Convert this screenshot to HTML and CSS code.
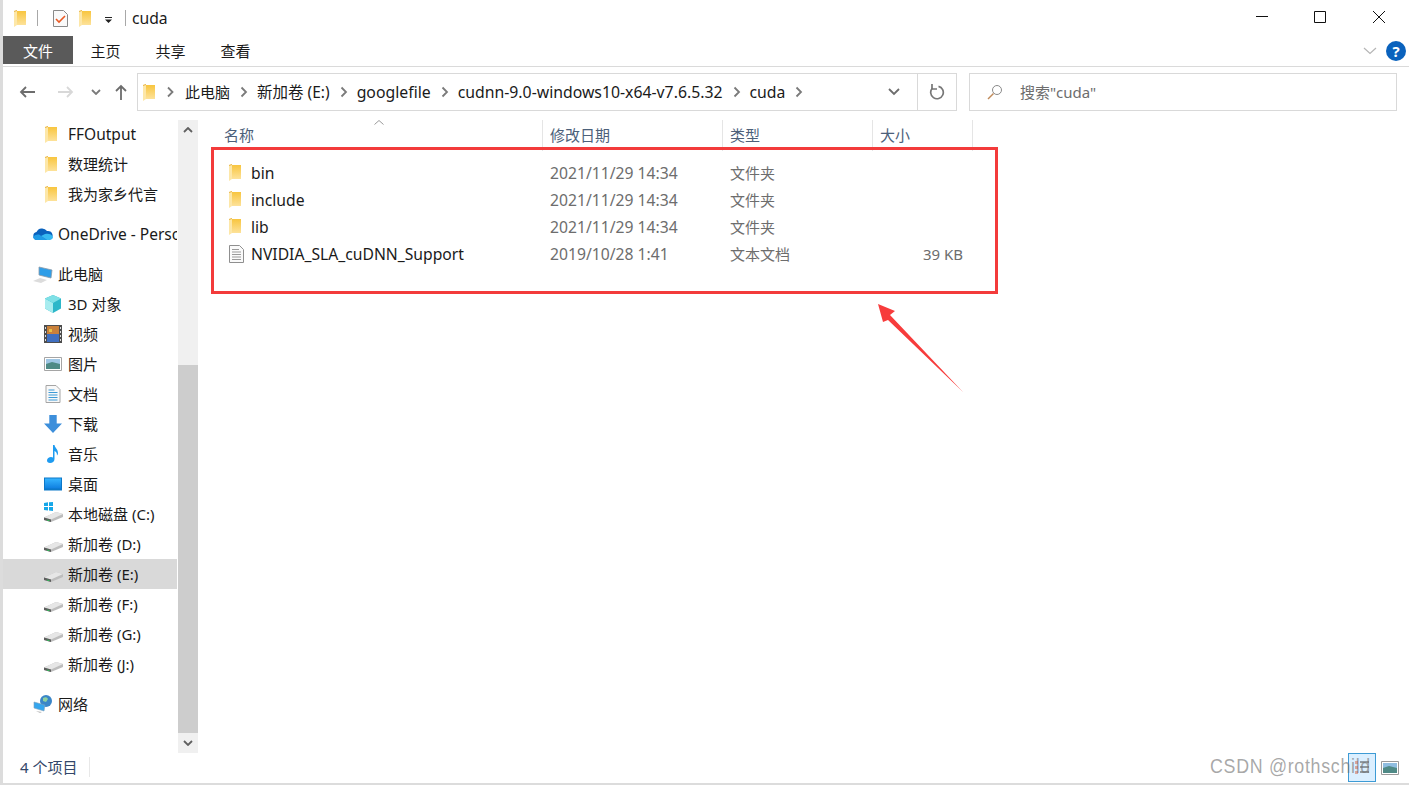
FILE: index.html
```html
<!DOCTYPE html>
<html lang="zh-CN">
<head>
    <meta charset="UTF-8">
    <title>cuda</title>
    <link rel="stylesheet" href="styles.css">
</head>
<body>
    <svg class="defs" width="0" height="0">
        <defs>
            <linearGradient id="fold" x1="0" y1="0" x2="0" y2="1"><stop offset="0" stop-color="#f8c53f"/><stop offset="1" stop-color="#fde29a"/></linearGradient>
            <linearGradient id="blue" x1="0" y1="0" x2="0" y2="1"><stop offset="0" stop-color="#35b4ff"/><stop offset="1" stop-color="#0f7fe0"/></linearGradient>
            <symbol id="folder" viewBox="0 0 12 17">
                <path d="M3 1h9v14H3z" fill="url(#fold)"/>
                <path d="M0 1l3-1v15l-3 2z" fill="#fde7a8"/>
                <path d="M0 1l3-1v1L0 2z" fill="#e9b64a"/>
            </symbol>
            <symbol id="drive" viewBox="0 0 19 10">
                <path d="M0 5.500L12 0l7 2v3L7 10 0 8z" fill="#bdbdbd"/>
                <path d="M0 5.500l7 2L19 2l-7-2z" fill="#e6e6e6"/>
                <path d="M0 5.500l7 2V10L0 8z" fill="#5e5e5e"/>
                <path d="M3 7.500l2.500.7v1l-2.500-.7z" fill="#2fbf5a"/>
            </symbol>
            <symbol id="chev" viewBox="0 0 8 12">
                <path d="M2 1.500L6.500 6 2 10.500" fill="none" stroke="#7a7a7a" stroke-width="1.8"/>
            </symbol>
        </defs>
    </svg>

    <div class="window">
        <div class="titlebar">
            <svg class="ic-folder"><use href="#folder"/></svg>
            <span class="qsep first"></span>
            <svg class="ic-check" viewBox="0 0 15 17">
                <path d="M.5.500h10l4 4v12H.5z" fill="#fafafa" stroke="#8a8a8a"/>
                <path d="M3 9l3 3 6-6" fill="none" stroke="#ea5a24" stroke-width="1.6"/>
            </svg>
            <svg class="ic-folder q2"><use href="#folder"/></svg>
            <svg class="ic-drop" viewBox="0 0 7 6"><path d="M0 0h7v1H0zM0 2.500h7L3.500 6z" fill="#222"/></svg>
            <span class="qsep last"></span>
            <span class="wintitle">cuda</span>
            <div class="winbtns">
                <svg viewBox="0 0 58 36"><path d="M23 16.500h12" stroke="#111" fill="none"/></svg>
                <svg viewBox="0 0 58 36"><path d="M23.500 11.500h11v11h-11z" stroke="#111" fill="none"/></svg>
                <svg viewBox="0 0 58 36"><path d="M24 11l12 12M36 11L24 23" stroke="#111" fill="none"/></svg>
            </div>
        </div>

        <div class="ribbon">
            <div class="tab active">文件</div>
            <div class="tab">主页</div>
            <div class="tab">共享</div>
            <div class="tab">查看</div>
            <svg class="rib-chev" viewBox="0 0 14 8"><path d="M1 1l6 5.500L13 1" fill="none" stroke="#b5b5b5" stroke-width="1.2"/></svg>
            <div class="help">?</div>
        </div>

        <div class="addrrow">
            <div class="navbtns">
                <svg viewBox="0 0 16 12" class="nav-back"><path d="M16 6H2M7 1L2 6l5 5" fill="none" stroke="#6d6d6d" stroke-width="1.8"/></svg>
                <svg viewBox="0 0 16 12" class="nav-fwd"><path d="M0 6h14M9 1l5 5-5 5" fill="none" stroke="#d8d8d8" stroke-width="1.8"/></svg>
                <svg viewBox="0 0 10 6" class="nav-down"><path d="M1 1l4 4 4-4" fill="none" stroke="#7a7a7a" stroke-width="1.8"/></svg>
                <svg viewBox="0 0 12 16" class="nav-up"><path d="M6 16V2M1 7l5-5 5 5" fill="none" stroke="#6d6d6d" stroke-width="1.8"/></svg>
            </div>
            <div class="addrbox">
                <svg class="ic-folder addr-folder"><use href="#folder"/></svg>
                <svg class="crumb-chev first"><use href="#chev"/></svg>
                <span>此电脑</span>
                <svg class="crumb-chev"><use href="#chev"/></svg>
                <span class="latin-s">新加卷 (E:)</span>
                <svg class="crumb-chev"><use href="#chev"/></svg>
                <span class="latin">googlefile</span>
                <svg class="crumb-chev"><use href="#chev"/></svg>
                <span class="latin">cudnn-9.0-windows10-x64-v7.6.5.32</span>
                <svg class="crumb-chev"><use href="#chev"/></svg>
                <span class="latin">cuda</span>
                <svg class="crumb-chev"><use href="#chev"/></svg>
                <svg class="addr-drop" viewBox="0 0 12 8"><path d="M1 1l5 5 5-5" fill="none" stroke="#6d6d6d" stroke-width="1.8"/></svg>
                <div class="refresh">
                    <svg viewBox="0 0 16 16" width="16" height="16"><path d="M9.500 2.300A6.300 6.300 0 1 1 3.500 4" fill="none" stroke="#777" stroke-width="1.7"/><path d="M3 0v5h5" fill="none" stroke="#777" stroke-width="1.700"/></svg>
                </div>
            </div>
            <div class="searchbox">
                <svg viewBox="0 0 16 16" width="16" height="16"><circle cx="10" cy="6" r="4.500" fill="none" stroke="#8a8a8a"/><path d="M6.500 9.500L1 15" stroke="#c08a5a" stroke-width="1.400"/></svg>
                <span>搜索"cuda"</span>
            </div>
        </div>

        <div class="body">
            <nav class="sidebar">
                <div class="tree">
                    <div class="node lv2"><svg class="ic-folder"><use href="#folder"/></svg><span class="latin-s">FFOutput</span></div>
                    <div class="node lv2"><svg class="ic-folder"><use href="#folder"/></svg>数理统计</div>
                    <div class="node lv2"><svg class="ic-folder"><use href="#folder"/></svg>我为家乡代言</div>

                    <div class="node lv1 gap">
                        <svg class="ic-big" viewBox="0 0 20 12"><path d="M4 12a4 4 0 0 1-.5-7.900A6 6 0 0 1 14 3a4.500 4.500 0 0 1 2 9z" fill="#0a62bd"/><path d="M4 12c-2 0-3.700-1-4-3 3-3 6-3 8-1l6 4z" fill="#1f9be6"/><path d="M8 8l4-2c3-1 7 0 8 3 0 2-2 3-4 3H14z" fill="#37b9f1"/></svg>
                        <span class="latin-s">OneDrive - Personal</span>
                    </div>

                    <div class="node lv1 gap">
                        <svg class="ic-big" viewBox="0 0 20 18"><path d="M6 2l13 3-1 8-12-3z" fill="#2f9ee8" stroke="#8a9aa8" stroke-width=".8"/><path d="M0 16l7-3 7 2-6 3z" fill="#dcdcdc"/></svg>
                        此电脑
                    </div>
                    <div class="node lv2">
                        <svg class="ic-item" viewBox="0 0 18 18"><path d="M9 0l8 3.500v10L9 18l-8-4.500v-10z" fill="#2db7c9"/><path d="M1 3.500L9 8v10l-8-4.500z" fill="#a8ecef"/><path d="M9 0l8 3.500L9 8 1 3.500z" fill="#7fe0e6"/></svg>
                        3D 对象
                    </div>
                    <div class="node lv2">
                        <svg class="ic-item" viewBox="0 0 18 18"><path d="M0 0h18v18H0z" fill="#4d4d4d"/><path d="M3 1h12v8H3z" fill="#c9803a"/><path d="M3 9h12v8H3z" fill="#3f6fc0"/><path d="M5 4h3v3H5z" fill="#e5c247"/><path d="M1 2h1v2H1zM1 6h1v2H1zM1 10h1v2H1zM1 14h1v2H1zM16 2h1v2h-1zM16 6h1v2h-1zM16 10h1v2h-1zM16 14h1v2h-1z" fill="#ddd"/></svg>
                        视频
                    </div>
                    <div class="node lv2">
                        <svg class="ic-item" viewBox="0 0 18 14"><path d="M.5.500h17v13H.5z" fill="#fff" stroke="#a5a5a5"/><path d="M2 2h14v5H2z" fill="#9fc6e4"/><path d="M2 7l6-2 8 2v5H2z" fill="#4f8a86"/></svg>
                        图片
                    </div>
                    <div class="node lv2">
                        <svg class="ic-item" viewBox="0 0 15 18"><path d="M.5.500h10l4 4v13H.5z" fill="#f8f8f8" stroke="#a5a5a5"/><path d="M3 5h6M3 7.500h9M3 10h9M3 12.500h9M3 15h9" stroke="#3d9ad6"/></svg>
                        文档
                    </div>
                    <div class="node lv2">
                        <svg class="ic-item" viewBox="0 0 17 17"><path d="M5 0h7v8h5l-8.500 9L0 8h5z" fill="#3d8fdb"/></svg>
                        下载
                    </div>
                    <div class="node lv2">
                        <svg class="ic-item" viewBox="0 0 12 18"><path d="M6 0h1.500c.5 3 3.500 4 3.500 8 0 1-.5 2-1 2.500.2-3-1.500-4-2.500-4.500V14c0 2.500-2 4-4.500 4C1 18 0 17 0 15.500 0 13.500 2 12 4 12c.8 0 1.500.2 2 .5z" fill="#1e9bf0"/></svg>
                        音乐
                    </div>
                    <div class="node lv2">
                        <svg class="ic-item" viewBox="0 0 18 13"><path d="M0 0h18v13H0z" fill="#0c78c8"/><path d="M1 1h16v10H1z" fill="url(#blue)"/></svg>
                        桌面
                    </div>
                    <div class="node lv2">
                        <span class="drive-wrap">
                            <svg class="ic-win" viewBox="0 0 9 9"><path d="M0 1l4-.7V4H0zM5 .2L9 0v4H5zM0 5h4v3.500L0 8zM5 5h4v4l-4-.5z" fill="#16a7e8"/></svg>
                            <svg class="ic-drive"><use href="#drive"/></svg>
                        </span>
                        本地磁盘 (C:)
                    </div>
                    <div class="node lv2"><svg class="ic-drive"><use href="#drive"/></svg>新加卷 (D:)</div>
                    <div class="node lv2 selected"><svg class="ic-drive"><use href="#drive"/></svg>新加卷 (E:)</div>
                    <div class="node lv2"><svg class="ic-drive"><use href="#drive"/></svg>新加卷 (F:)</div>
                    <div class="node lv2"><svg class="ic-drive"><use href="#drive"/></svg>新加卷 (G:)</div>
                    <div class="node lv2"><svg class="ic-drive"><use href="#drive"/></svg>新加卷 (J:)</div>

                    <div class="node lv1 gap">
                        <svg class="ic-big" viewBox="0 0 20 18"><circle cx="13" cy="6" r="6" fill="#3a86c8"/><path d="M10 3c2-1 4-1 5 1l-2 3-3-1z" fill="#8fd0a0"/><path d="M1 7l11 3-1 6-10-3z" fill="#35a6ee" stroke="#7fa0b8" stroke-width=".6"/><path d="M3 16l6 1-2 1z" fill="#bbb"/></svg>
                        网络
                    </div>
                </div>
                <div class="scrollbar">
                    <div class="sb-btn"><svg viewBox="0 0 10 6" width="10" height="6"><path d="M1 5l4-4 4 4" fill="none" stroke="#606060" stroke-width="1.800"/></svg></div>
                    <div class="sb-track"><div class="sb-thumb"></div></div>
                    <div class="sb-btn"><svg viewBox="0 0 10 6" width="10" height="6"><path d="M1 1l4 4 4-4" fill="none" stroke="#606060" stroke-width="1.800"/></svg></div>
                </div>
            </nav>

            <main class="files">
                <div class="sort-arrow"><svg viewBox="0 0 10 5" width="10" height="5"><path d="M.5 4.500L5 .5l4.500 4" fill="none" stroke="#9a9a9a"/></svg></div>
                <div class="row head">
                    <div>名称</div>
                    <div>修改日期</div>
                    <div>类型</div>
                    <div>大小</div>
                </div>
                <div class="rows">
                    <div class="row file">
                        <div class="name"><svg class="ic-folder"><use href="#folder"/></svg>bin</div>
                        <div class="date">2021/11/29 14:34</div>
                        <div>文件夹</div>
                        <div></div>
                    </div>
                    <div class="row file">
                        <div class="name"><svg class="ic-folder"><use href="#folder"/></svg>include</div>
                        <div class="date">2021/11/29 14:34</div>
                        <div>文件夹</div>
                        <div></div>
                    </div>
                    <div class="row file">
                        <div class="name"><svg class="ic-folder"><use href="#folder"/></svg>lib</div>
                        <div class="date">2021/11/29 14:34</div>
                        <div>文件夹</div>
                        <div></div>
                    </div>
                    <div class="row file">
                        <div class="name">
                            <svg class="ic-txt" viewBox="0 0 15 18"><path d="M.5.500h10l4 4v13H.5z" fill="#fafafa" stroke="#8f8f8f"/><path d="M3 4.500h7M3 7h9M3 9.500h9M3 12h9M3 14.500h9" stroke="#9a9a9a"/></svg>
                            NVIDIA_SLA_cuDNN_Support
                        </div>
                        <div class="date">2019/10/28 1:41</div>
                        <div>文本文档</div>
                        <div class="size">39 KB</div>
                    </div>
                </div>
            </main>
        </div>

        <div class="statusbar">
            <span class="count">4 个项目</span>
        </div>
    </div>

    <!-- annotations drawn on top of the screenshot -->
    <div class="redbox"></div>
    <svg class="redarrow" viewBox="0 0 90 92" width="90" height="92">
        <path d="M0 0L17 7 12 11 85 88 10 16 5 18z" fill="#f73c3c"/>
    </svg>
    <div class="viewbtns">
        <div class="vbtn on">
            <svg viewBox="0 0 16 18" width="16" height="18"><path d="M1 2h3v3H1zM1 7h3v3H1zM1 12h3v3H1z" fill="#d8a7a0"/><path d="M6 3h9M6 8h9M6 13h9" stroke="#444"/></svg>
        </div>
        <div class="vbtn">
            <svg viewBox="0 0 18 14" width="18" height="14"><path d="M.5.500h17v13H.5z" fill="#fff" stroke="#999"/><path d="M2 2h14v5H2z" fill="#8fbde0"/><path d="M2 7l6-2 8 2v5H2z" fill="#4f8a86"/></svg>
        </div>
    </div>
    <div class="watermark">CSDN @rothschild</div>
</body>
</html>
```

FILE: styles.css
```css
* {
    box-sizing: border-box;
}
html, body {
    margin: 0;
    padding: 0;
    height: 785px;
    overflow: hidden;
}
body {
    position: relative;
    background: #dcdcdc;
    font-family: "Noto Sans", "Noto Sans CJK SC", sans-serif;
    font-size: 15px;
    line-height: 20px;
    color: #1a1a1a;
}
.defs {
    position: absolute;
}
.latin {
    font-size: 15.8px;
}
.latin-s {
    font-size: 15.5px;
}
.window {
    margin-left: 3px;
    width: 1406px;
    height: 783px;
    background: #fff;
    display: flex;
    flex-direction: column;
}

/* title bar */
.titlebar {
    height: 36px;
    display: flex;
    align-items: center;
    padding-left: 11px;
    flex-shrink: 0;
}
.ic-folder {
    width: 12px;
    height: 17px;
    flex-shrink: 0;
}
.qsep {
    width: 1px;
    height: 16px;
    background: #a8a8a8;
}
.qsep.first {
    margin: 0 15px 0 11px;
}
.qsep.last {
    margin: 0 6px 0 13px;
}
.ic-check {
    width: 15px;
    height: 17px;
}
.q2 {
    margin-left: 11px;
}
.ic-drop {
    width: 7px;
    height: 6px;
    margin: 3px 0 0 14px;
}
.wintitle {
    font-size: 15.7px;
}
.winbtns {
    margin-left: auto;
    display: flex;
    margin-right: 2px;
    align-self: flex-start;
}
.winbtns svg {
    width: 58px;
    height: 36px;
}

/* ribbon tabs */
.ribbon {
    height: 31px;
    display: flex;
    align-items: flex-start;
    border-bottom: 1px solid #dadada;
    flex-shrink: 0;
}
.tab {
    width: 65px;
    height: 28px;
    line-height: 30px;
    text-align: center;
}
.tab.active {
    width: 70px;
    background: #5a5a5a;
    color: #fff;
}
.rib-chev {
    width: 14px;
    height: 8px;
    margin: 11px 0 0 auto;
}
.help {
    width: 20px;
    height: 20px;
    border-radius: 50%;
    background: #0a62bd;
    color: #fff;
    font-weight: 700;
    line-height: 20px;
    text-align: center;
    margin: 5px 3px 0 9px;
}

/* address row */
.addrrow {
    height: 52px;
    display: flex;
    align-items: flex-start;
    padding-top: 6px;
    flex-shrink: 0;
}
.navbtns {
    width: 134px;
    height: 38px;
    display: flex;
    align-items: center;
    padding-left: 16px;
    flex-shrink: 0;
}
.nav-back, .nav-fwd {
    width: 16px;
    height: 12px;
}
.nav-fwd {
    margin-left: 23px;
}
.nav-down {
    width: 10px;
    height: 6px;
    margin-left: 17px;
}
.nav-up {
    width: 12px;
    height: 16px;
    margin-left: 14px;
}
.addrbox {
    width: 820px;
    height: 38px;
    border: 1px solid #d9d9d9;
    display: flex;
    align-items: center;
    padding-left: 5px;
    flex-shrink: 0;
}
.crumb-chev {
    width: 27px;
    height: 12px;
    flex-shrink: 0;
}
.crumb-chev.first {
    width: 30px;
}
.addr-drop {
    width: 12px;
    height: 8px;
    margin-left: auto;
}
.refresh {
    width: 39px;
    height: 36px;
    margin-left: 17px;
    border-left: 1px solid #d9d9d9;
    display: flex;
    align-items: center;
    justify-content: center;
}
.searchbox {
    width: 428px;
    height: 38px;
    margin-left: 12px;
    border: 1px solid #d9d9d9;
    display: flex;
    align-items: center;
    padding-left: 17px;
    color: #6d6d6d;
    gap: 17px;
}

/* navigation pane */
.body {
    flex: 1;
    display: flex;
    min-height: 0;
}
.sidebar {
    width: 195px;
    display: flex;
    flex-shrink: 0;
}
.tree {
    width: 174px;
    margin-right: 1px;
    overflow: hidden;
}
.node {
    height: 30px;
    display: flex;
    align-items: center;
    white-space: nowrap;
}
.node.gap {
    margin-top: 10px;
}
.lv1 {
    padding-left: 30px;
    gap: 5px;
}
.lv2 {
    padding-left: 42px;
}
.lv2 > .ic-folder {
    margin-right: 11px;
}
.selected {
    background: #d9d9d9;
}
.ic-big {
    width: 20px;
    height: 18px;
    flex-shrink: 0;
}
.ic-item {
    width: 18px;
    height: 18px;
    margin: 0 6px 0 -1px;
    flex-shrink: 0;
}
.ic-drive {
    width: 19px;
    height: 10px;
    margin: 6px 5px 0 -1px;
    flex-shrink: 0;
}
.drive-wrap {
    position: relative;
    display: flex;
}
.ic-win {
    position: absolute;
    left: -1px;
    top: -4px;
    width: 9px;
    height: 9px;
}
.scrollbar {
    width: 20px;
    display: flex;
    flex-direction: column;
    background: #f0f0f0;
    height: 633px;
    margin-top: 1px;
}
.sb-btn {
    height: 20px;
    display: flex;
    align-items: center;
    justify-content: center;
    flex-shrink: 0;
}
.sb-track {
    flex: 1;
    padding-top: 225px;
}
.sb-thumb {
    height: 368px;
    background: #cdcdcd;
}

/* file list */
.files {
    flex: 1;
    position: relative;
    padding-left: 18px;
}
.sort-arrow {
    position: absolute;
    left: 176px;
    top: 0;
    line-height: 0;
}
.row {
    display: grid;
    grid-template-columns: 327px 180px 150px 100px;
}
.head {
    height: 30px;
    color: #4c607a;
    line-height: 31px;
    padding-top: 1px;
}
.head > div {
    padding-left: 7px;
    border-right: 1px solid #e5e5e5;
}
.head > div:first-child {
    padding-left: 8px;
}
.rows {
    padding-top: 10px;
}
.file {
    height: 27px;
    align-items: center;
    color: #6d6d6d;
}
.file > div {
    padding-left: 7px;
}
.file .date {
    font-size: 15.7px;
}
.file .name {
    display: flex;
    align-items: center;
    color: #1a1a1a;
    font-size: 15.7px;
    padding-left: 13px;
    gap: 10px;
}
.ic-txt {
    width: 15px;
    height: 18px;
    margin-right: -3px;
}
.file .size {
    text-align: right;
    padding-right: 10px;
}

/* status bar */
.statusbar {
    height: 30px;
    flex-shrink: 0;
    padding: 4px 0 0 17px;
    color: #33476a;
}
.count {
    display: inline-block;
    height: 20px;
    padding-right: 12px;
    border-right: 1px solid #e8e8e8;
}

/* things lying over the window */
.redbox {
    position: absolute;
    left: 211px;
    top: 147px;
    width: 787px;
    height: 147px;
    border: 3px solid #f33b3b;
}
.redarrow {
    position: absolute;
    left: 878px;
    top: 304px;
}
.viewbtns {
    position: absolute;
    left: 1348px;
    top: 753px;
    display: flex;
}
.vbtn {
    width: 28px;
    height: 29px;
    display: flex;
    align-items: center;
    justify-content: center;
}
.vbtn.on {
    background: rgba(204, 232, 255, 0.7);
    border: 1px solid #3d9bd5;
}
.watermark {
    position: absolute;
    left: 1210px;
    top: 756px;
    font-family: "Liberation Sans", sans-serif;
    font-size: 21px;
    letter-spacing: 0.8px;
    transform: scaleX(0.85);
    transform-origin: left center;
    color: rgba(110, 110, 110, 0.6);
    white-space: nowrap;
}
```
